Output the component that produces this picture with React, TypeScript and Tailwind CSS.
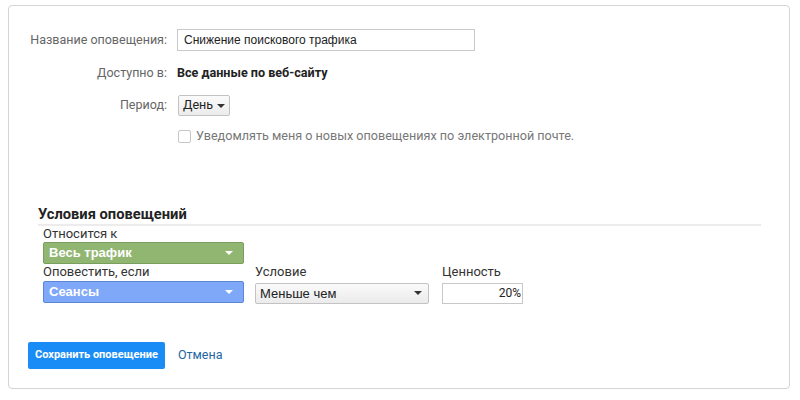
import { ChangeEvent, useState } from 'react'

interface FieldRowProps {
  label?: string
  children: React.ReactNode
  className?: string
}

// Right-aligned label column followed by the control
function FieldRow({ label, children, className = '' }: FieldRowProps) {
  return (
    <div className={`flex items-center ${className}`}>
      <div className="w-[168px] shrink-0 pr-[10px] text-right text-[12.5px] text-[#666]">{label}</div>
      <div className="flex items-center">{children}</div>
    </div>
  )
}

function Caret({ className = '' }: { className?: string }) {
  return (
    <svg width="8" height="4" viewBox="0 0 8 4" className={className}>
      <path d="M0 0h8L4 4z" fill="currentColor" />
    </svg>
  )
}

interface ColoredSelectProps {
  value: string
  tone: 'green' | 'blue'
}

function ColoredSelect({ value, tone }: ColoredSelectProps) {
  const colors =
    tone === 'green'
      ? 'bg-[#91b671] border-[#7a9f5c]'
      : 'bg-[#7fa8f8] border-[#5b86d6]'
  return (
    <button
      className={`flex h-[22px] w-[201px] items-center justify-between rounded-[2px] border pl-[5px] pr-[10px] font-['Liberation_Sans',sans-serif] text-[13px] font-bold text-white ${colors}`}
    >
      <span>{value}</span>
      <Caret className="text-white" />
    </button>
  )
}

export default function App() {
  const [name, setName] = useState('Снижение поискового трафика')
  const [notify, setNotify] = useState(false)
  const [threshold, setThreshold] = useState('20%')

  return (
    <div className="h-[400px] w-[800px] bg-white pt-[5px] pl-[8px] pr-[10px] font-['Roboto','Liberation_Sans',sans-serif]">
      <div className="h-[384px] rounded-[4px] border border-[#d4d4d4]">
        {/* Alert settings */}
        <div className="pt-[23px]">
          <FieldRow label="Название оповещения:">
            <input
              value={name}
              onChange={(e: ChangeEvent<HTMLInputElement>) => setName(e.target.value)}
              className="h-[22px] w-[298px] border border-[#c8c8c8] px-[6px] font-['Liberation_Sans',sans-serif] text-[12px] text-[#222] outline-none"
            />
          </FieldRow>
          <FieldRow label="Доступно в:" className="mt-[12px] h-[20px]">
            <span className="text-[12.6px] font-bold text-[#222]">Все данные по веб-сайту</span>
          </FieldRow>
          <FieldRow label="Период:" className="mt-[12px]">
            <button className="ml-[1px] flex h-[21px] items-center gap-[4px] rounded-[2px] border border-[#c3c3c3] bg-gradient-to-b from-[#fafafa] to-[#ececec] px-[4px] text-[12.5px] text-[#222]">
              День
              <Caret className="text-[#333]" />
            </button>
          </FieldRow>
          <FieldRow className="mt-[11px]">
            <label className="flex items-center gap-[5px] text-[12.6px] text-[#777]">
              <input
                type="checkbox"
                checked={notify}
                onChange={() => setNotify(!notify)}
                className="ml-[1px] h-[13px] w-[13px] appearance-none rounded-[2px] border border-[#c6c6c6] bg-white"
              />
              Уведомлять меня о новых оповещениях по электронной почте.
            </label>
          </FieldRow>
        </div>

        {/* Conditions */}
        <div className="mt-[58px] ml-[29px] w-[723px]">
          <h3 className="text-[14.7px] leading-[20px] font-bold text-[#222]">Условия оповещений</h3>
          <div className="h-[2px] bg-[#ececec]" />
          <div className="pl-[5px] text-[13px] text-[#333]">
            <div className="leading-[16px]">Относится к</div>
            <div>
              <ColoredSelect value="Весь трафик" tone="green" />
            </div>
            <div className="flex gap-[11px]">
              <div>
                <div className="leading-[16px]">Оповестить, если</div>
                <div className="mt-[1px]">
                  <ColoredSelect value="Сеансы" tone="blue" />
                </div>
              </div>
              <div>
                <div className="leading-[16px]">Условие</div>
                <button className="mt-[3px] flex h-[21px] w-[174px] items-center justify-between rounded-[2px] border border-[#c3c3c3] bg-gradient-to-b from-[#fafafa] to-[#ebebeb] pl-[4px] pr-[6px] font-['Liberation_Sans',sans-serif] text-[13px] text-[#222]">
                  Меньше чем
                  <Caret className="text-[#333]" />
                </button>
              </div>
              <div className="ml-[2px]">
                <div className="leading-[16px]">Ценность</div>
                <input
                  value={threshold}
                  onChange={(e: ChangeEvent<HTMLInputElement>) => setThreshold(e.target.value)}
                  className="mt-[3px] h-[21px] w-[81px] border border-[#c8c8c8] pr-[1px] text-right text-[12px] text-[#222] outline-none"
                />
              </div>
            </div>
          </div>
        </div>

        {/* Actions */}
        <div className="mt-[38px] ml-[19px] flex items-center gap-[13px]">
          <button className="h-[27px] rounded-[2px] bg-[#1a8cf5] px-[7px] text-[11px] font-bold text-white">
            Сохранить оповещение
          </button>
          <a href="#" className="text-[12.5px] text-[#2466a3]">
            Отмена
          </a>
        </div>
      </div>
    </div>
  )
}
